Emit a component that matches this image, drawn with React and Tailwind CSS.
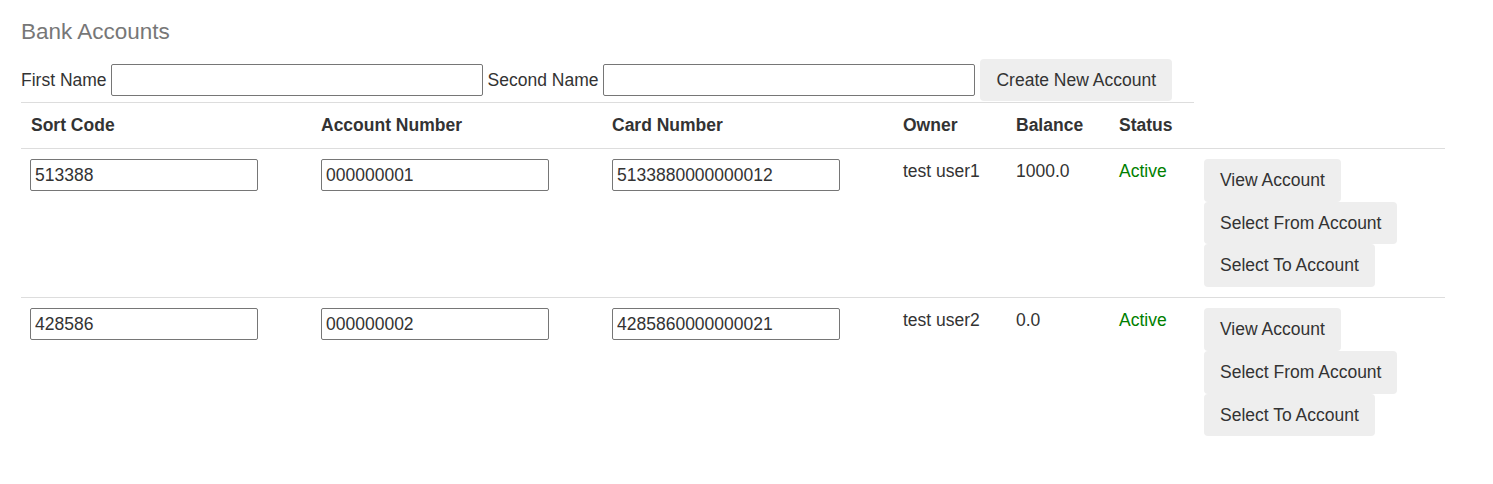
import React from 'react';

const accounts = [
  { sort: '513388', number: '000000001', card: '5133880000000012', owner: 'test user1', balance: '1000.0', status: 'Active' },
  { sort: '428586', number: '000000002', card: '4285860000000021', owner: 'test user2', balance: '0.0', status: 'Active' },
];

const btn = 'block bg-[#eeeeee] text-[#333] rounded-[4px] px-4 py-[11px] leading-[20.7px] text-[17.5px] whitespace-nowrap';
const field = 'border border-[#767676] rounded-[2px] h-8 px-1 text-[17.5px] text-[#333] bg-white outline-none';

const App = () => {
  return (
    <div className="min-h-screen bg-white pl-[21px] pt-[19px] text-[17.5px] text-[#333]" style={{ fontFamily: '"Liberation Sans", Arial, sans-serif' }}>
      <h2 className="text-[22.5px] leading-[26px] text-[#777] mb-[14px]">Bank Accounts</h2>

      <div className="flex items-center gap-[5px] h-[42px]">
        <label className="-mr-px">First Name</label>
        <input className={`${field} w-[372px]`} />
        <label>Second Name</label>
        <input className={`${field} w-[372px]`} />
        <button className={btn}>Create New Account</button>
      </div>

      <table className="mt-px w-[1424px] border-collapse text-left">
        <thead>
          <tr className="h-[46px]">
            <th className="w-[290px] border-t border-[#dddddd] px-[10px] align-middle">Sort Code</th>
            <th className="w-[291px] border-t border-[#dddddd] px-[10px] align-middle">Account Number</th>
            <th className="w-[291px] border-t border-[#dddddd] px-[10px] align-middle">Card Number</th>
            <th className="w-[113px] border-t border-[#dddddd] px-[10px] align-middle">Owner</th>
            <th className="w-[103px] border-t border-[#dddddd] px-[10px] align-middle">Balance</th>
            <th className="w-[85px] border-t border-[#dddddd] px-[10px] align-middle">Status</th>
            <th className="px-[10px]"></th>
          </tr>
        </thead>
        <tbody>
          {accounts.map((a) => (
            <tr key={a.sort} className="border-t border-[#dddddd]">
              <td className="px-[10px] pt-[10px] pb-[10px] align-top">
                <input className={`${field} w-[228px] -ml-px`} defaultValue={a.sort} />
              </td>
              <td className="px-[10px] pt-[10px] align-top">
                <input className={`${field} w-[228px]`} defaultValue={a.number} />
              </td>
              <td className="px-[10px] pt-[10px] align-top">
                <input className={`${field} w-[228px]`} defaultValue={a.card} />
              </td>
              <td className="px-[10px] pt-[10px] align-top leading-[25px]">{a.owner}</td>
              <td className="px-[10px] pt-[10px] align-top leading-[25px]">{a.balance}</td>
              <td className="px-[10px] pt-[10px] align-top leading-[25px] text-[#008000]">{a.status}</td>
              <td className="px-[10px] pt-[10px] pb-[10px] align-top">
                <div className="flex flex-col items-start">
                  <button className={btn}>View Account</button>
                  <button className={btn}>Select From Account</button>
                  <button className={btn}>Select To Account</button>
                </div>
              </td>
            </tr>
          ))}
        </tbody>
      </table>
    </div>
  );
};

export default App;
